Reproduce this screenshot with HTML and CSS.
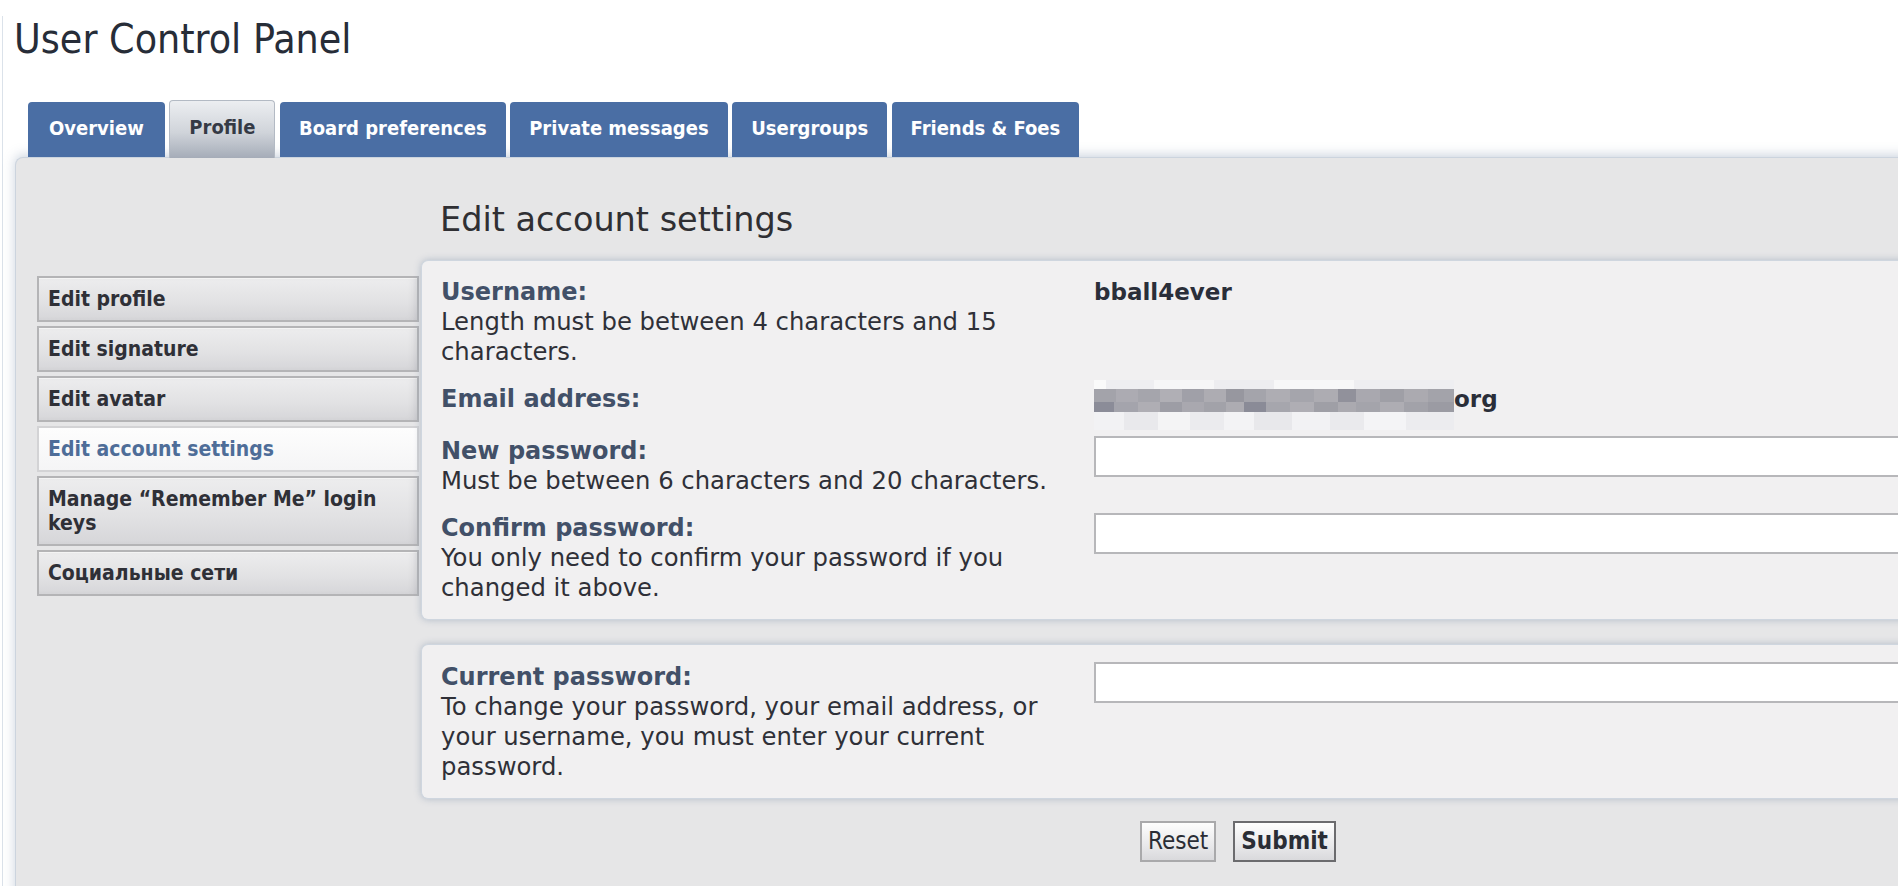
FILE: index.html
```html
<!DOCTYPE html>
<html lang="en">
<head>
<meta charset="utf-8">
<title>User Control Panel</title>
<link rel="stylesheet" href="styles.css">
</head>
<body>
<div class="page">
  <h1 class="page-title">User Control Panel</h1>
  <ul class="tabs">
    <li class="tab">Overview</li>
    <li class="tab active">Profile</li>
    <li class="tab">Board preferences</li>
    <li class="tab">Private messages</li>
    <li class="tab">Usergroups</li>
    <li class="tab">Friends &amp; Foes</li>
  </ul>
  <div class="panel">
    <nav class="sidemenu">
      <ul class="menu">
        <li class="menu-item">Edit profile</li>
        <li class="menu-item">Edit signature</li>
        <li class="menu-item">Edit avatar</li>
        <li class="menu-item active">Edit account settings</li>
        <li class="menu-item">Manage “Remember Me” login keys</li>
        <li class="menu-item">Социальные сети</li>
      </ul>
    </nav>
    <main class="content">
      <h2 class="section-title">Edit account settings</h2>
      <div class="box">
        <div class="row">
          <div class="row-label"><div class="label">Username:</div><div class="explain">Length must be between 4 characters and 15 characters.</div></div>
          <div class="row-value"><span class="value">bball4ever</span></div>
        </div>
        <div class="row row-email">
          <div class="row-label"><div class="label">Email address:</div></div>
          <div class="row-value"><span class="email-blur"></span><span class="value">org</span></div>
        </div>
        <div class="row">
          <div class="row-label"><div class="label">New password:</div><div class="explain">Must be between 6 characters and 20 characters.</div></div>
          <div class="row-value"><input class="field" type="password"></div>
        </div>
        <div class="row">
          <div class="row-label"><div class="label">Confirm password:</div><div class="explain">You only need to confirm your password if you changed it above.</div></div>
          <div class="row-value"><input class="field" type="password"></div>
        </div>
      </div>
      <div class="box box-second">
        <div class="row">
          <div class="row-label"><div class="label">Current password:</div><div class="explain">To change your password, your email address, or your username, you must enter your current password.</div></div>
          <div class="row-value"><input class="field" type="password"></div>
        </div>
      </div>
      <div class="actions">
        <button class="btn" type="button">Reset</button>
        <button class="btn btn-primary" type="button">Submit</button>
      </div>
    </main>
  </div>
</div>
</body>
</html>
```
FILE: styles.css
```css
html, body {
  margin: 0;
  padding: 0;
  background: #ffffff;
  overflow: hidden;
}
body {
  font-family: "DejaVu Sans", Verdana, sans-serif;
  color: #333333;
}
.page {
  margin-left: 2px;
  border-left: 1px solid #dbe2ea;
  min-height: 886px;
}
.page-title {
  margin: 16px 0 0 0;
  padding-left: 11px;
  font-family: "DejaVu Sans Condensed", "DejaVu Sans", sans-serif;
  font-weight: normal;
  font-size: 40.7px;
  line-height: 46px;
  color: #272d38;
}
.tabs {
  list-style: none;
  margin: 38px 0 0 25px;
  padding: 0;
  height: 57px;
  display: flex;
  align-items: flex-end;
  gap: 4.5px;
  position: relative;
  z-index: 2;
}
.tab {
  box-sizing: border-box;
  height: 55px;
  padding: 14px 19px 17px;
  line-height: 24px;
  font-family: "DejaVu Sans Condensed", "DejaVu Sans", sans-serif;
  font-weight: bold;
  font-size: 20px;
  color: #ffffff;
  background: #4a6ea4;
  border-radius: 4px 4px 0 0;
  white-space: nowrap;
}
.tab:first-child {
  padding: 14px 21px 17px;
}
.tab.active {
  height: 58px;
  margin-bottom: -1px;
  padding: 14px 19px 20px;
  color: #353a45;
  background: linear-gradient(#eceef1, #d0d4da 55%, #a5acb8);
  border: 1px solid #b3bac4;
  border-bottom: none;
}
.panel {
  box-sizing: border-box;
  width: 2040px;
  margin-left: 12px;
  padding: 0 0 60px 21px;
  background: #e6e6e7;
  border: 1px solid #ccd4de;
  border-right: none;
  border-radius: 8px 0 0 0;
  box-shadow: 0 -2px 12px rgba(140, 158, 182, 0.45);
  display: flex;
  align-items: flex-start;
  gap: 2px;
  min-height: 760px;
}
.sidemenu {
  width: 382px;
  flex: none;
  padding-top: 118px;
}
.menu {
  list-style: none;
  margin: 0;
  padding: 0;
  display: flex;
  flex-direction: column;
  gap: 4px;
}
.menu-item {
  box-sizing: border-box;
  min-height: 46px;
  padding: 9px 40px 9px 9px;
  border: 2px solid #b4b4b6;
  background: linear-gradient(#ededee, #e1e1e3 60%, #d6d6d9);
  box-shadow: inset -6px 0 8px -4px rgba(0, 0, 0, 0.08), inset 0 1px 0 #f6f6f6;
  font-family: "DejaVu Sans Condensed", "DejaVu Sans", sans-serif;
  font-weight: bold;
  font-size: 21px;
  line-height: 24px;
  color: #2f3037;
}
.menu-item.active {
  border-color: #d3d3d5;
  background: linear-gradient(#fdfdfd, #f5f5f6);
  box-shadow: none;
  color: #4e6d98;
}
.content {
  flex: 1;
  min-width: 0;
  padding-top: 42px;
}
.section-title {
  margin: 0 0 20px 0;
  padding-left: 19px;
  font-weight: normal;
  font-size: 33.5px;
  line-height: 40px;
  color: #2f2f33;
}
.box {
  background: #f1f0f1;
  border: 1px solid #cfd6df;
  border-right: none;
  border-radius: 7px 0 0 7px;
  box-shadow: 0 0 7px rgba(118, 138, 164, 0.45);
  padding: 16px 0 16px 19px;
  display: flex;
  flex-direction: column;
  gap: 17px;
}
.box-second {
  margin-top: 24px;
  padding-top: 17px;
}
.row {
  display: flex;
  align-items: flex-start;
}
.row-label {
  box-sizing: border-box;
  width: 653px;
  flex: none;
  padding-right: 20px;
  font-size: 24.3px;
  line-height: 30px;
}
.label {
  font-weight: bold;
  font-size: 24px;
  color: #425068;
}
.explain {
  color: #2f3038;
}
.row-value {
  display: flex;
  align-items: flex-start;
  font-size: 23px;
  line-height: 30px;
}
.value {
  font-weight: bold;
  color: #2a2e39;
}
.email-blur {
  display: block;
  width: 360px;
  height: 50px;
  margin-top: -4px;
  margin-bottom: -11px;
  background:
    linear-gradient(to right, #a3a3aa 0 22px, #acabb2 22px 44px, #a5a5ac 44px 66px, #b0afb5 66px 88px, #a0a0a8 88px 110px, #adacb2 110px 132px, #97979f 132px 150px, #a4a4ab 150px 172px, #aeadb3 172px 196px, #a5a5ac 196px 220px, #adacb2 220px 244px, #91919b 244px 262px, #a9a8af 262px 286px, #9f9fa6 286px 310px, #abaab0 310px 334px, #a3a3aa 334px 360px) 0 9px / 100% 13px no-repeat,
    linear-gradient(to right, #8b8c98 0 20px, #a4a4ac 20px 44px, #afaeb4 44px 66px, #9d9da5 66px 88px, #a9a8af 88px 110px, #a2a2a9 110px 132px, #adacb2 132px 150px, #8a8b97 150px 172px, #a6a6ad 172px 196px, #afaeb4 196px 220px, #9f9fa6 220px 244px, #abaab0 244px 262px, #a4a4ab 262px 286px, #aeadb3 286px 310px, #a2a2a9 310px 334px, #9b9ba3 334px 360px) 0 22px / 100% 10px no-repeat,
    linear-gradient(to right, #f2f2f4 0 30px, #e9e9ec 30px 64px, #f4f4f5 64px 96px, #ebebee 96px 130px, #f3f3f5 130px 160px, #e8e8eb 160px 198px, #f2f2f4 198px 236px, #eaeaed 236px 270px, #f4f4f6 270px 312px, #ececef 312px 360px) 0 32px / 100% 18px no-repeat,
    linear-gradient(to right, #fafafa 0 12px, #eeeef1 12px 60px, #f6f6f7 60px 120px, #ededf0 120px 180px, #f7f7f8 180px 260px, #eeeef1 260px 360px) 0 0 / 100% 9px no-repeat;
}
.field {
  box-sizing: border-box;
  width: 880px;
  height: 41px;
  margin: 0;
  border: 2px solid #b7b7ba;
  background: #ffffff;
  padding: 0 6px;
  font-size: 20px;
}
.actions {
  display: flex;
  justify-content: center;
  gap: 17px;
  margin-top: 22px;
}
.btn {
  box-sizing: border-box;
  height: 41px;
  padding: 0 6px;
  margin: 0;
  border: 2px solid #a9a9ab;
  background: linear-gradient(#fdfdfd, #e9e9eb 60%, #d9d9dc);
  font-family: "DejaVu Sans Condensed", "DejaVu Sans", sans-serif;
  font-size: 24px;
  line-height: 37px;
  color: #2a2d35;
  border-radius: 0;
}
.btn-primary {
  font-weight: bold;
  border-color: #6b6b6e;
}
```
